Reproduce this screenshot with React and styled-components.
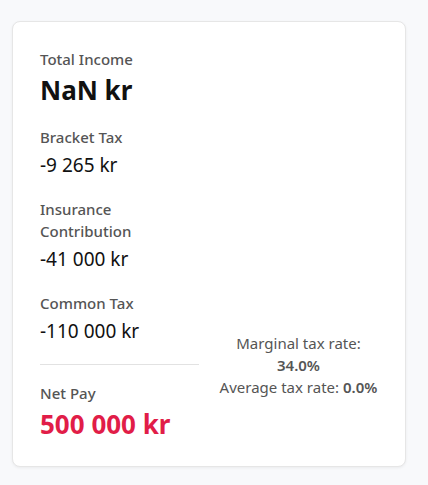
import React from 'react';
import styled, { createGlobalStyle } from 'styled-components';

const GlobalStyle = createGlobalStyle`
  body {
    margin: 0;
    background: #f8f9fb;
    font-family: "Noto Sans", "Open Sans", sans-serif;
  }
`;

const Page = styled.div`
  padding: 21px 22px 16px 12px;
`;

const Card = styled.div`
  width: 394px;
  box-sizing: border-box;
  background: #fff;
  border: 1px solid #e6e6e6;
  border-radius: 8px;
  box-shadow: 0 1px 3px rgba(0, 0, 0, 0.06);
  padding: 26px 27px;
  display: grid;
  grid-template-columns: 1fr 1fr;
  column-gap: 20px;
`;

const Breakdown = styled.div`
  display: flex;
  flex-direction: column;
`;

const Item = styled.div`
  display: flex;
  flex-direction: column;
  gap: 4px;
  margin-bottom: 20px;
  &:last-child {
    margin-bottom: 0;
  }
`;

const Label = styled.div`
  font-size: 15px;
  line-height: 22px;
  font-weight: 500;
  color: #555;
`;

const Value = styled.div`
  font-size: ${p => (p.big ? '26px' : '19px')};
  line-height: ${p => (p.big ? '32px' : '26px')};
  font-weight: ${p => (p.big ? 700 : 400)};
  color: ${p => p.color || '#111'};
`;

const Divider = styled.hr`
  border: none;
  border-top: 1px solid #e2e2e2;
  margin: 0 0 17px;
`;

const Rates = styled.div`
  align-self: end;
  margin-bottom: 42px;
  text-align: center;
  font-size: 15px;
  line-height: 22px;
  color: #555;
  strong {
    font-weight: 600;
  }
`;

const items = [
  { label: 'Total Income', value: 'NaN kr', big: true },
  { label: 'Bracket Tax', value: '-9 265 kr' },
  { label: 'Insurance Contribution', value: '-41 000 kr' },
  { label: 'Common Tax', value: '-110 000 kr' },
];

export default function App() {
  return (
    <Page>
      <GlobalStyle />
      <Card>
        <Breakdown>
          {items.map(it => (
            <Item key={it.label}>
              <Label>{it.label}</Label>
              <Value big={it.big}>{it.value}</Value>
            </Item>
          ))}
          <Divider />
          <Item>
            <Label>Net Pay</Label>
            <Value big color="#e11d48">500 000 kr</Value>
          </Item>
        </Breakdown>
        <Rates>
          Marginal tax rate: <strong>34.0%</strong>
          <br />
          Average tax rate: <strong>0.0%</strong>
        </Rates>
      </Card>
    </Page>
  );
}
